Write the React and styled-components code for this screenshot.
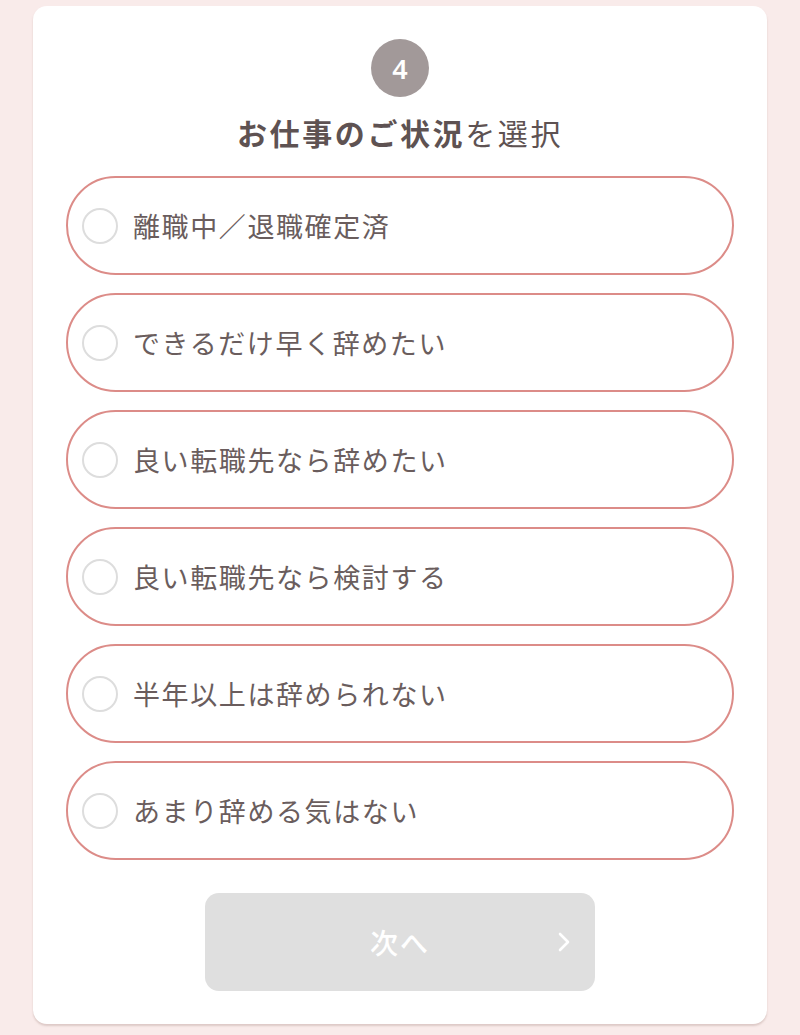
import React, { useState } from 'react';
import styled, { createGlobalStyle } from 'styled-components';

const GlobalStyle = createGlobalStyle`
  html, body {
    margin: 0;
    padding: 0;
    background: #f9ebea;
  }
  body {
    font-family: "Noto Sans CJK JP", "Noto Sans", sans-serif;
  }
`;

const Page = styled.div`
  padding: 6px 33px 10px;
  min-height: 1035px;
  box-sizing: border-box;
`;

const Card = styled.div`
  background: #ffffff;
  border-radius: 14px;
  box-shadow: 0 2px 2px rgba(170, 140, 135, 0.35);
  padding: 33px 33px 33px;
  display: flex;
  flex-direction: column;
  align-items: center;
`;

const StepBadge = styled.div`
  width: 58px;
  height: 58px;
  border-radius: 50%;
  background: #a29999;
  color: #ffffff;
  display: flex;
  align-items: center;
  justify-content: center;
  font-family: "Noto Sans", "Liberation Sans", sans-serif;
  font-size: 27px;
  font-weight: 600;
  line-height: 1;
`;

const Title = styled.h2`
  margin: 13px 0 21px;
  font-size: 30px;
  line-height: 45px;
  letter-spacing: 2.6px;
  font-weight: 400;
  color: #5e5252;
  b {
    font-weight: 700;
  }
`;

const Options = styled.div`
  width: 100%;
  display: flex;
  flex-direction: column;
  gap: 18px;
`;

const Option = styled.label`
  height: 99px;
  box-sizing: border-box;
  border: 2px solid ${props => (props.checked ? '#d9776f' : '#dc8c88')};
  border-radius: 50px;
  display: flex;
  align-items: center;
  padding-left: 14px;
  cursor: pointer;
  background: ${props => (props.checked ? '#fdf3f2' : '#ffffff')};
`;

const Radio = styled.span`
  width: 36px;
  height: 36px;
  box-sizing: border-box;
  border-radius: 50%;
  border: 2px solid #dddddd;
  flex-shrink: 0;
  display: flex;
  align-items: center;
  justify-content: center;
  &::after {
    content: '';
    width: 18px;
    height: 18px;
    border-radius: 50%;
    background: ${props => (props.checked ? '#dc8c88' : 'transparent')};
  }
`;

const OptionText = styled.span`
  margin-left: 15px;
  font-size: 27px;
  letter-spacing: 1.6px;
  color: #6a5d5d;
`;

const NextButton = styled.button`
  margin-top: 33px;
  width: 390px;
  height: 98px;
  border: none;
  border-radius: 14px;
  background: ${props => (props.disabled ? '#dfdfdf' : '#dc8c88')};
  color: #ffffff;
  font-family: "Noto Sans CJK JP", sans-serif;
  font-size: 28px;
  font-weight: 500;
  letter-spacing: 2px;
  position: relative;
  display: flex;
  align-items: center;
  justify-content: center;
  cursor: ${props => (props.disabled ? 'default' : 'pointer')};
`;

const Chevron = styled.svg`
  position: absolute;
  right: 24px;
  top: 50%;
  transform: translateY(-50%);
`;

const choices = [
  '離職中／退職確定済',
  'できるだけ早く辞めたい',
  '良い転職先なら辞めたい',
  '良い転職先なら検討する',
  '半年以上は辞められない',
  'あまり辞める気はない',
];

export default function App() {
  const [selected, setSelected] = useState(null);

  return (
    <Page>
      <GlobalStyle />
      <Card>
        <StepBadge>4</StepBadge>
        <Title>
          <b>お仕事のご状況</b>を選択
        </Title>
        <Options>
          {choices.map((text, i) => (
            <Option
              key={text}
              checked={selected === i}
              onClick={() => setSelected(i)}
            >
              <Radio checked={selected === i} />
              <OptionText>{text}</OptionText>
            </Option>
          ))}
        </Options>
        <NextButton disabled={selected === null}>
          次へ
          <Chevron width="14" height="22" viewBox="0 0 14 22">
            <path
              d="M3 3 L11 11 L3 19"
              fill="none"
              stroke="#ffffff"
              strokeWidth="2.6"
              strokeLinecap="round"
              strokeLinejoin="round"
            />
          </Chevron>
        </NextButton>
      </Card>
    </Page>
  );
}
